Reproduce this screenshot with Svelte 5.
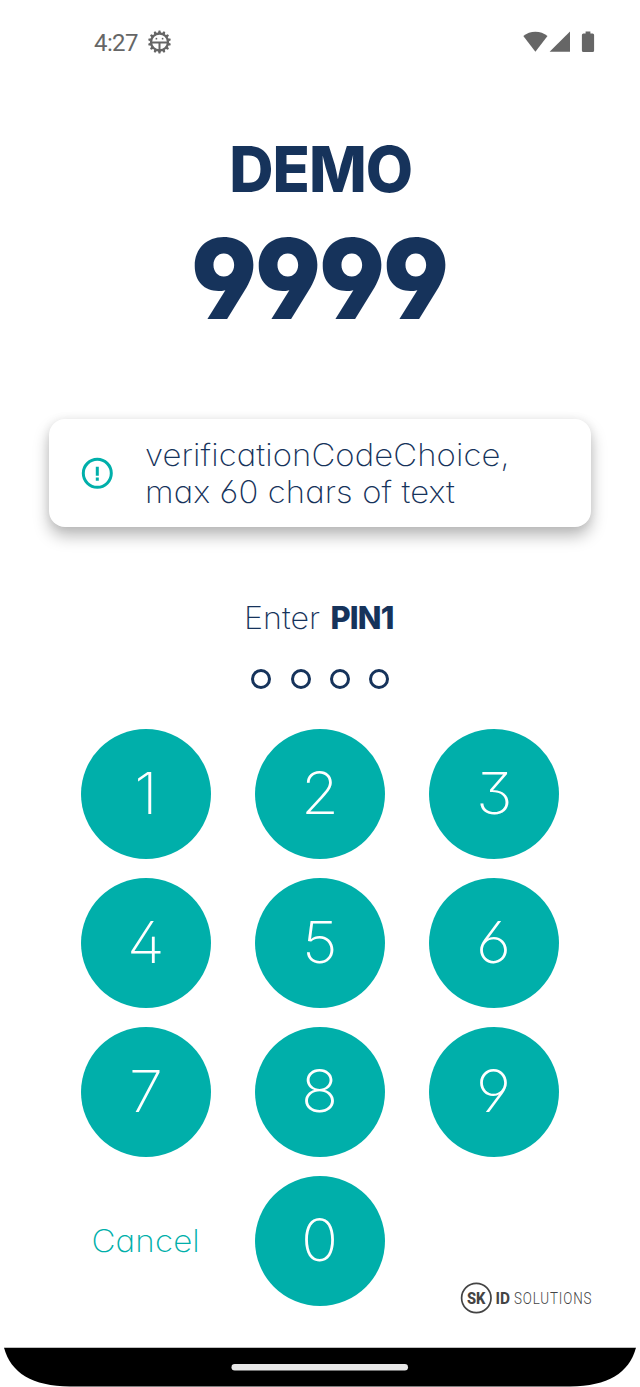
<script>
  const rows = [['1', '2', '3'], ['4', '5', '6'], ['7', '8', '9']];
  const teeth = Array.from({ length: 14 }, (_, i) => i * 360 / 14);
</script>

<main class="screen">
  <header class="status">
    <div class="clock">
      <span>4:27</span>
      <svg width="24" height="24" viewBox="0 0 24 24" fill="none" stroke="#666">
        <circle cx="11.500" cy="12" r="8.500" stroke-width="2.300" />
        {#each teeth as angle}
          <path d="M9.900 3.200 10.600 .6h1.800l.7 2.600z" fill="#666" stroke="none" transform="rotate({angle} 11.500 12)" />
        {/each}
        <path d="M3.500 12.400h16M11.500 12v8" stroke-width="2" />
        <circle cx="8.400" cy="8.700" r=".9" fill="#666" stroke="none" />
        <circle cx="14.600" cy="8.700" r=".9" fill="#666" stroke="none" />
      </svg>
    </div>
    <svg width="74" height="24" viewBox="0 0 74 24" fill="#666">
      <path d="M1.3 6.1C8 .2 18.8 .2 25.5 6.1L13.4 21.8z" />
      <path d="M48 1.6V21.8H27.6z" />
      <path d="M63.6 1.4h4.8v2.1h2.2q1.5 0 1.5 1.5v15.6q0 1.500-1.500 1.500h-9.200q-1.500 0-1.500-1.500V5q0-1.500 1.500-1.500h2.200z" />
    </svg>
  </header>

  <h1>DEMO</h1>
  <div class="code">9999</div>

  <section class="card">
    <svg width="32" height="32" viewBox="0 0 32 32">
      <circle cx="16.300" cy="16.300" r="14" fill="none" stroke="#00afaa" stroke-width="3" />
      <path d="M16.300 9.700v9M16.300 20.400v3.300" stroke="#00afaa" stroke-width="3" />
    </svg>
    <p>verificationCodeChoice,<br />max 60 chars of text</p>
  </section>

  <div class="prompt"><span>Enter</span><b>PIN1</b></div>
  <div class="dots"><i></i><i></i><i></i><i></i></div>

  <div class="keypad">
    {#each rows as row}
      {#each row as digit}
        <button class="key"><span>{digit}</span></button>
      {/each}
    {/each}
    <button class="cancel"><span>Cancel</span></button>
    <button class="key"><span>0</span></button>
  </div>

  <footer>
    <svg class="brand" width="150" height="34" viewBox="0 0 150 34" fill="#444">
      <circle cx="17.300" cy="17" r="14.700" fill="none" stroke="#444" stroke-width="1.700" />
      <text x="8" y="22.800" font-size="16.500" font-weight="800" textLength="18.500" lengthAdjust="spacingAndGlyphs">SK</text>
      <text x="36.500" y="22.600" font-size="16" font-weight="700" textLength="14.500" lengthAdjust="spacingAndGlyphs">ID</text>
      <g transform="translate(55 22.600) scale(.84 1)">
        <text font-size="16" font-weight="300" letter-spacing="1">SOLUTIONS</text>
      </g>
    </svg>
    <svg class="nav" width="640" height="40" viewBox="0 0 640 40">
      <path d="M4 .7H636C629 26 608 39 570 39.500H70C32 39 11 26 4 .7z" />
      <rect x="231.500" y="17" width="176.500" height="6.500" rx="3.250" fill="#e8e8e8" />
    </svg>
  </footer>
</main>

<style>
  :global(body) { margin: 0; background: #fff; }
  .screen {
    width: 640px; height: 1387px; overflow: hidden;
    display: flex; flex-direction: column; align-items: center;
    font-family: Inter, sans-serif; font-feature-settings: "cv11", "cv02", "cv03", "cv04", "cv09"; color: #16335b;
  }
  .status {
    width: 502px; height: 24px; padding-top: 30px;
    display: flex; justify-content: space-between; align-items: center;
    flex: none; transform: translateX(25px);
  }
  .clock { display: flex; align-items: center; gap: 10px; font: 24px/24px Roboto, sans-serif; color: #666; }
  .clock span { width: 44px; letter-spacing: -.6px; white-space: nowrap; padding-top: 2px; }
  h1 { margin: 79px 0 0; font-size: 63.500px; line-height: 72px; font-weight: 800; letter-spacing: -1px; padding-left: 2px; transform: scaleX(.965); }
  .code { margin-top: 13px; font-size: 111px; line-height: 121px; font-weight: 900; letter-spacing: -1.800px; transform: translateX(-.8px) scaleX(.92); }
  .card {
    width: 542px; height: 108px; margin-top: 80px; box-sizing: border-box; padding-left: 32px; flex: none;
    display: flex; align-items: center; gap: 32px; border-radius: 16px; background: #fff;
    box-shadow: 0 9px 16px rgba(0, 0, 0, .27), 0 0 10px rgba(0, 0, 0, .07);
  }
  p { margin: 0; font-size: 31px; line-height: 37px; font-weight: 200; letter-spacing: .1px; white-space: nowrap; transform: scaleX(1.060); transform-origin: left; }
  .prompt { margin-top: 71px; height: 40px; display: flex; gap: 9px; font-size: 31px; line-height: 40px; font-weight: 200; }
  .prompt span { transform: scaleX(1.040); transform-origin: right; }
  .prompt b { font-weight: 850; letter-spacing: -.8px; transform: translateX(1px); }
  .dots { display: flex; gap: 19.200px; margin: 30.500px 0 0 .5px; }
  .dots i { width: 20px; height: 20px; border: 3.500px solid #16335b; border-radius: 50%; box-sizing: border-box; }
  .keypad {
    margin-top: 40px; display: grid; grid-template-columns: repeat(3, 130.500px);
    grid-auto-rows: 130.500px; column-gap: 43.500px; row-gap: 18.600px;
  }
  button { border: 0; padding: 0; font: inherit; font-feature-settings: inherit; }
  button span { display: inline-block; }
  .key { border-radius: 50%; background: #00afaa; color: #fff; font-size: 58px; font-weight: 200; padding-bottom: 2px; }
  .key span { transform: scaleX(1.060); }
  .cancel { background: none; color: #00afaa; font-size: 31px; font-weight: 200; letter-spacing: .1px; padding-bottom: 2px; }
  .cancel span { transform: scaleX(1.070); }
  footer { margin-top: -25px; display: flex; flex-direction: column; align-items: flex-end; }
  .brand { margin: 0 31px 31.500px 0; font-family: Roboto, sans-serif; }
  .nav { display: block; }
</style>
